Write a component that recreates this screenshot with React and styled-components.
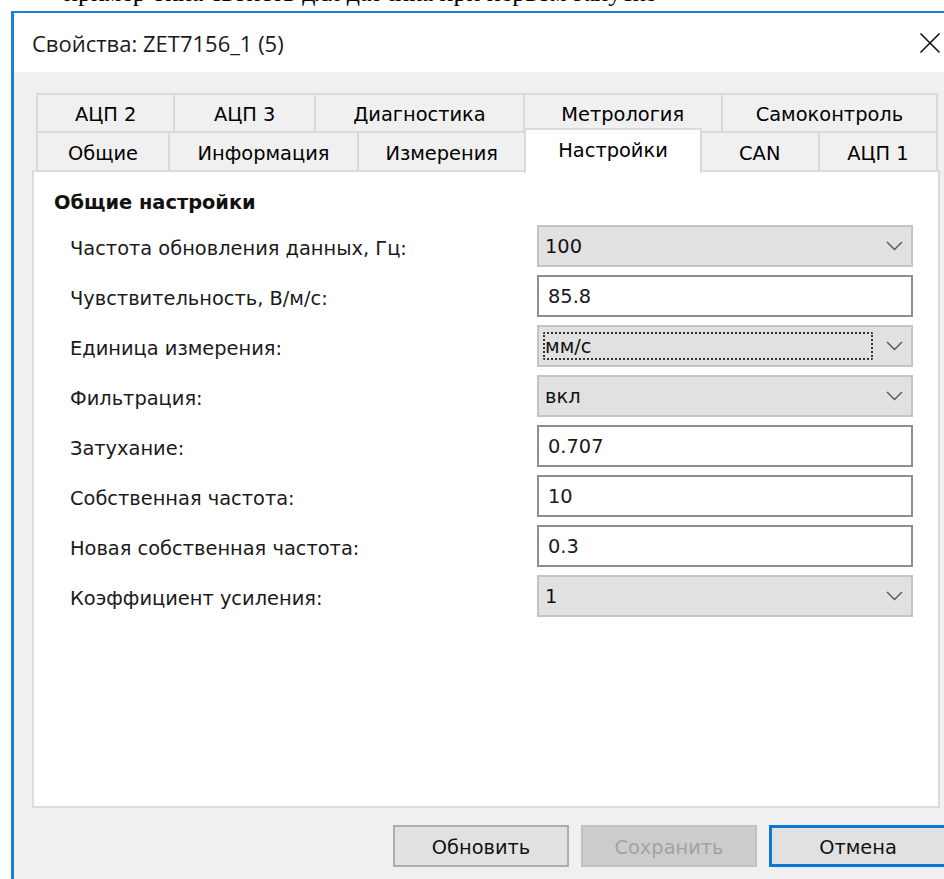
import React from 'react';
import styled, { createGlobalStyle } from 'styled-components';

const Global = createGlobalStyle`
  html, body { margin: 0; padding: 0; background: #fff; overflow: hidden; }
  * { box-sizing: border-box; }
`;

const uiFont = `"DejaVu Sans", "Noto Sans", sans-serif`;
const uiSize = '19.4px';

const Page = styled.div`
  width: 944px;
  height: 879px;
  overflow: hidden;
  background: #fff;
  display: flex;
  flex-direction: column;
`;

const DocLine = styled.div`
  height: 11px;
  flex: none;
  overflow: hidden;
  display: flex;
  align-items: flex-end;
  padding-left: 64px;
  font-family: "Liberation Serif", serif;
  font-size: 26px;
  line-height: 30px;
  white-space: nowrap;
  color: #000;
  & > span { display: block; transform: translateY(-3px); }
`;

const Window = styled.div`
  margin-left: 11px;
  width: 949px;
  flex: 1;
  background: #f0f0f0;
  border-top: 2px solid #1b80d9;
  border-left: 3px solid #1b80d9;
  display: flex;
  flex-direction: column;
`;

const TitleBar = styled.div`
  height: 59px;
  flex: none;
  background: #fff;
  display: flex;
  align-items: center;
  justify-content: space-between;
  padding: 0 19px 0 18px;
`;

const Title = styled.div`
  font-family: "Open Sans", "Noto Sans", sans-serif;
  font-size: 22px;
  color: #1a1a1a;
  padding-top: 1px;
`;

const CloseBox = styled.div`
  width: 22px;
  height: 22px;
  display: flex;
`;

const Body = styled.div`
  flex: 1;
  display: flex;
  flex-direction: column;
  padding: 21px 20px 0 18px;
`;

const Tabs = styled.div`
  display: flex;
  flex-direction: column;
  padding: 0 2px 0 4px;
`;

const TabRow = styled.div`
  display: flex;
  height: ${p => p.$h}px;
`;

const Tab = styled.div`
  flex: ${p => p.$w} 1 0;
  display: flex;
  align-items: center;
  justify-content: center;
  padding-top: 3px;
  font-family: ${uiFont};
  font-size: ${uiSize};
  color: #000;
  white-space: nowrap;
  background: ${p => (p.$active ? '#fff' : '#f0f0f0')};
  border-top: 2px solid #dadada;
  border-left: 2px solid #dadada;
  border-right: ${p => (p.$last ? '2px solid #dadada' : 'none')};
  position: relative;
  ${p =>
    p.$active &&
    `
    margin-top: -3px;
    margin-bottom: -3px;
    padding-bottom: 6px;
    border-right: 2px solid #dadada;
    margin-right: -2px;
    z-index: 2;
  `}
`;

const Panel = styled.div`
  height: 638px;
  background: #fff;
  border: 2px solid #dcdcdc;
  padding: 19px 25px 0 20px;
  position: relative;
  z-index: 1;
`;

const Heading = styled.div`
  font-family: ${uiFont};
  font-weight: bold;
  font-size: ${uiSize};
  line-height: 24px;
  color: #111;
  margin-bottom: 10px;
`;

const Grid = styled.div`
  display: grid;
  grid-template-columns: 1fr 376px;
  grid-auto-rows: 42px;
  row-gap: 8px;
`;

const Label = styled.div`
  display: flex;
  align-items: center;
  padding: 4px 0 0 16px;
  font-family: ${uiFont};
  font-size: ${uiSize};
  color: #1a1a1a;
  white-space: nowrap;
`;

const TextBox = styled.div`
  border: 2px solid #8f8f8f;
  background: #fff;
  display: flex;
  align-items: center;
  padding: 1px 0 0 9px;
  font-family: ${uiFont};
  font-size: ${uiSize};
  color: #1a1a1a;
`;

const Combo = styled.div`
  border: 2px solid #c4c4c4;
  background: #e1e1e1;
  display: flex;
  padding: 5px 0 5px 4px;
`;

const ComboValue = styled.div`
  flex: 1;
  display: flex;
  align-items: center;
  padding-top: 1px;
  border: 2px dotted ${p => (p.$focused ? '#333' : 'transparent')};
  border-radius: 2px;
  font-family: ${uiFont};
  font-size: ${uiSize};
  color: #111;
`;

const Arrow = styled.div`
  width: 38px;
  display: flex;
  align-items: center;
  justify-content: center;
  padding-left: 4px;
`;

const Buttons = styled.div`
  display: flex;
  justify-content: flex-end;
  gap: 12px;
  padding-top: 17px;
  margin-right: -7px;
`;

const Button = styled.div`
  width: ${p => (p.$default ? 178 : 176)}px;
  height: 42px;
  display: flex;
  align-items: center;
  justify-content: center;
  padding-top: 2px;
  font-family: ${uiFont};
  font-size: ${uiSize};
  background: ${p => (p.$disabled ? '#cccccc' : '#e1e1e1')};
  color: ${p => (p.$disabled ? '#a2a2a2' : '#111')};
  border: ${p =>
    p.$default ? '3px solid #0a78d7' : p.$disabled ? '2px solid #c2c2c2' : '2px solid #adadad'};
`;

const Chevron = () => (
  <svg width="17" height="10" viewBox="0 0 17 10">
    <polyline points="1,1 8.5,8.5 16,1" fill="none" stroke="#555" strokeWidth="1.4" />
  </svg>
);

const CloseIcon = () => (
  <svg width="22" height="22" viewBox="0 0 22 22">
    <path d="M1.5 1.5 L20.5 20.5 M20.5 1.5 L1.5 20.5" stroke="#111" strokeWidth="1.6" fill="none" />
  </svg>
);

const topTabs = [
  ['АЦП 2', 137],
  ['АЦП 3', 141],
  ['Диагностика', 209],
  ['Метрология', 199],
  ['Самоконтроль', 216],
];

const bottomTabs = [
  ['Общие', 132],
  ['Информация', 190],
  ['Измерения', 168],
  ['Настройки', 176, true],
  ['CAN', 118],
  ['АЦП 1', 118],
];

const fields = [
  { label: 'Частота обновления данных, Гц:', value: '100', kind: 'combo' },
  { label: 'Чувствительность, В/м/с:', value: '85.8', kind: 'text' },
  { label: 'Единица измерения:', value: 'мм/с', kind: 'combo', focused: true },
  { label: 'Фильтрация:', value: 'вкл', kind: 'combo' },
  { label: 'Затухание:', value: '0.707', kind: 'text' },
  { label: 'Собственная частота:', value: '10', kind: 'text' },
  { label: 'Новая собственная частота:', value: '0.3', kind: 'text' },
  { label: 'Коэффициент усиления:', value: '1', kind: 'combo' },
];

export default function App() {
  return (
    <Page>
      <Global />
      <DocLine>
        <span>пример окна свойств для датчика при первом запуске</span>
      </DocLine>
      <Window>
        <TitleBar>
          <Title>Свойства: ZET7156_1 (5)</Title>
          <CloseBox>
            <CloseIcon />
          </CloseBox>
        </TitleBar>
        <Body>
          <Tabs>
            <TabRow $h={38}>
              {topTabs.map(([name, w], i) => (
                <Tab key={name} $w={w} $last={i === topTabs.length - 1}>
                  {name}
                </Tab>
              ))}
            </TabRow>
            <TabRow $h={39}>
              {bottomTabs.map(([name, w, active], i) => (
                <Tab key={name} $w={w} $active={active} $last={i === bottomTabs.length - 1}>
                  {name}
                </Tab>
              ))}
            </TabRow>
          </Tabs>
          <Panel>
            <Heading>Общие настройки</Heading>
            <Grid>
              {fields.map(f => (
                <React.Fragment key={f.label}>
                  <Label>{f.label}</Label>
                  {f.kind === 'text' ? (
                    <TextBox>{f.value}</TextBox>
                  ) : (
                    <Combo>
                      <ComboValue $focused={f.focused}>{f.value}</ComboValue>
                      <Arrow>
                        <Chevron />
                      </Arrow>
                    </Combo>
                  )}
                </React.Fragment>
              ))}
            </Grid>
          </Panel>
          <Buttons>
            <Button>Обновить</Button>
            <Button $disabled>Сохранить</Button>
            <Button $default>Отмена</Button>
          </Buttons>
        </Body>
      </Window>
    </Page>
  );
}
